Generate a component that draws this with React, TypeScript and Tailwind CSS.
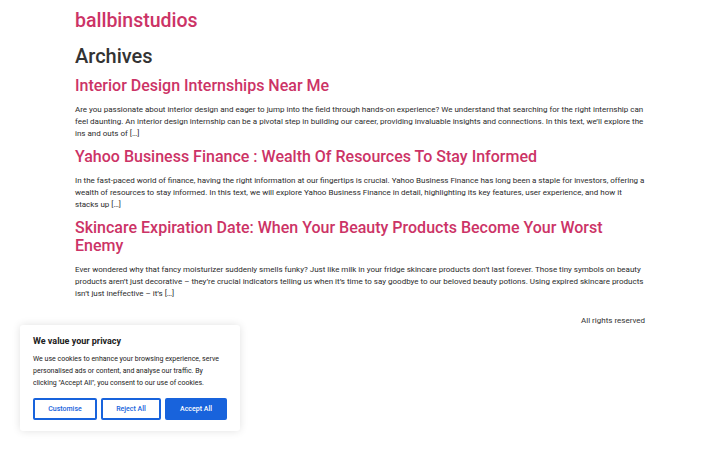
export default function App() {
  const posts = [
    {
      title: "Interior Design Internships Near Me",
      text: "Are you passionate about interior design and eager to jump into the field through hands-on experience? We understand that searching for the right internship can feel daunting. An interior design internship can be a pivotal step in building our career, providing invaluable insights and connections. In this text, we\u2019ll explore the ins and outs of [\u2026]",
    },
    {
      title: "Yahoo Business Finance : Wealth Of Resources To Stay Informed",
      text: "In the fast-paced world of finance, having the right information at our fingertips is crucial. Yahoo Business Finance has long been a staple for investors, offering a wealth of resources to stay informed. In this text, we will explore Yahoo Business Finance in detail, highlighting its key features, user experience, and how it stacks up [\u2026]",
    },
    {
      title: "Skincare Expiration Date: When Your Beauty Products Become Your Worst Enemy",
      text: "Ever wondered why that fancy moisturizer suddenly smells funky? Just like milk in your fridge skincare products don\u2019t last forever. Those tiny symbols on beauty products aren\u2019t just decorative \u2013 they\u2019re crucial indicators telling us when it\u2019s time to say goodbye to our beloved beauty potions. Using expired skincare products isn\u2019t just ineffective \u2013 it\u2019s [\u2026]",
    },
  ];

  return (
    <div className="relative min-h-[450px] w-[720px] bg-white text-[#333] font-['Roboto',sans-serif]">
      <div className="mx-auto w-[570px]">
        <header className="pt-[8px]">
          <a className="text-[19.5px] leading-[26px] font-medium text-[#cc3366]">ballbinstudios</a>
        </header>
        <main>
          <h1 className="mt-[9px] text-[20px] leading-[26px] font-medium text-[#333]">Archives</h1>
          <div className="mt-[8px] flex flex-col">
            {posts.map((p) => (
              <article key={p.title} className="mb-[8px]">
                <h2 className="text-[16px] leading-[18px] font-medium text-[#cc3366]">{p.title}</h2>
                <p className="mt-[9px] text-[8px] leading-[12px] text-[#2b2b2b]">{p.text}</p>
              </article>
            ))}
          </div>
        </main>
        <footer className="mt-[7px] flex justify-end">
          <p className="text-[8px] leading-[12px] text-[#333]">All rights reserved</p>
        </footer>
      </div>

      {/* cookie consent */}
      <div className="absolute left-[20px] top-[325px] w-[220px] rounded-[3px] bg-white px-[13px] pt-[10px] pb-[11px] shadow-[0_0_8px_rgba(0,0,0,0.12)]">
        <p className="text-[9px] leading-[12px] font-bold text-[#212121]">We value your privacy</p>
        <p className="mt-[6px] text-[7px] leading-[12px] text-[#212121]">
          We use cookies to enhance your browsing experience, serve personalised ads or content, and analyse our traffic. By clicking "Accept All", you consent to our use of cookies.
        </p>
        <div className="mt-[9px] flex gap-[4px]">
          <button className="h-[22px] w-[64px] rounded-[2px] border-2 border-[#1863dc] text-[7px] font-medium text-[#1863dc]">Customise</button>
          <button className="h-[22px] w-[60px] rounded-[2px] border-2 border-[#1863dc] text-[7px] font-medium text-[#1863dc]">Reject All</button>
          <button className="h-[22px] w-[62px] rounded-[2px] border-2 border-[#1863dc] bg-[#1863dc] text-[7px] font-medium text-white">Accept All</button>
        </div>
      </div>
    </div>
  );
}
